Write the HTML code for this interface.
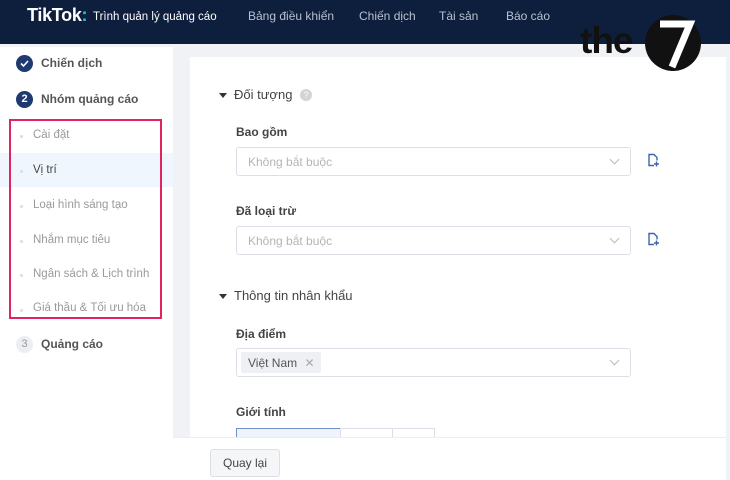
<!DOCTYPE html>
<html><head><meta charset="utf-8"><style>
*{margin:0;padding:0;box-sizing:border-box}
body{width:730px;height:480px;overflow:hidden;background:#f0f2f5;font-family:"Liberation Sans","DejaVu Sans",sans-serif;position:relative;color:#333}
.a{position:absolute;white-space:nowrap}
.hdr{left:0;top:0;width:730px;height:44px;background:#0e1f3e}
.nav{color:#b8c0cf;font-size:12px;top:9px}
.side{left:0;top:47px;width:173px;height:433px;background:#fff}
.main{left:190px;top:57px;width:536px;height:423px;background:#fff}
.sub{left:33px;font-size:11.5px;color:#9a9a9a}
.dot{left:20px;width:3px;height:3px;background:#ddd;border-radius:50%}
.lbl{font-size:12px;font-weight:bold;color:#444}
.inp{left:236px;width:395px;height:29px;border:1px solid #dcdfe6;border-radius:3px;background:#fff}
.ph{left:11px;top:7px;font-size:12px;color:#b5b5b5}
.chev{right:12px;top:8px;width:7px;height:7px;border-right:1px solid #bbb;border-bottom:1px solid #bbb;transform:rotate(45deg)}
.tri{width:0;height:0;border-left:4px solid transparent;border-right:4px solid transparent;border-top:5px solid #333}
</style></head><body>
<div class="a hdr"></div>
<div class="a" style="left:27px;top:5px;color:#fff;font-size:18px;font-weight:bold;letter-spacing:-0.3px">TikTok<span style="color:#25c3e0">:</span></div>
<div class="a" style="left:93px;top:11px;color:#fff;font-size:11.5px">Trình quản lý quảng cáo</div>
<div class="a nav" style="left:248px">Bảng điều khiển</div>
<div class="a nav" style="left:359px">Chiến dịch</div>
<div class="a nav" style="left:439px">Tài sản</div>
<div class="a nav" style="left:506px">Báo cáo</div>

<div class="a side"></div>
<div class="a" style="left:16px;top:55px;width:17px;height:17px;border-radius:50%;background:#1e3a6e"></div>
<svg class="a" style="left:16px;top:55px" width="17" height="17"><path d="M5 8.5 L7.5 11 L12 6" stroke="#fff" stroke-width="1.6" fill="none"/></svg>
<div class="a" style="left:41px;top:56px;font-size:12px;font-weight:bold;color:#555">Chiến dịch</div>
<div class="a" style="left:16px;top:91px;width:17px;height:17px;border-radius:50%;background:#1e3a6e;color:#fff;font-size:11px;font-weight:bold;text-align:center;line-height:17px">2</div>
<div class="a" style="left:41px;top:92px;font-size:12px;font-weight:bold;color:#555">Nhóm quảng cáo</div>
<div class="a" style="left:0;top:153px;width:173px;height:34px;background:#f0f6fd"></div>
<div class="a dot" style="top:135px"></div><div class="a sub" style="top:129px">Cài đặt</div>
<div class="a dot" style="top:170px"></div><div class="a sub" style="top:164px;color:#444">Vị trí</div>
<div class="a dot" style="top:205px"></div><div class="a sub" style="top:199px">Loại hình sáng tạo</div>
<div class="a dot" style="top:240px"></div><div class="a sub" style="top:234px">Nhắm mục tiêu</div>
<div class="a dot" style="top:274px"></div><div class="a sub" style="top:268px">Ngân sách &amp; Lịch trình</div>
<div class="a dot" style="top:309px"></div><div class="a sub" style="top:302px">Giá thầu &amp; Tối ưu hóa</div>
<div class="a" style="left:9px;top:119px;width:153px;height:200px;border:2.5px solid #e0245e"></div>
<div class="a" style="left:16px;top:336px;width:17px;height:17px;border-radius:50%;background:#eceef2;color:#999;font-size:11px;text-align:center;line-height:17px">3</div>
<div class="a" style="left:41px;top:337px;font-size:12px;font-weight:bold;color:#555">Quảng cáo</div>

<div class="a main"></div>
<div class="a tri" style="left:219px;top:93px"></div>
<div class="a" style="left:234px;top:87px;font-size:13px;color:#444">Đối tượng</div>
<div class="a" style="left:300px;top:89px;width:12px;height:12px;border-radius:50%;background:#d4d4d4;color:#fff;font-size:9px;text-align:center;line-height:12px">?</div>
<div class="a lbl" style="left:236px;top:125px">Bao gồm</div>
<div class="a inp" style="top:147px"><div class="a ph">Không bắt buộc</div><div class="a chev"></div></div>
<div class="a lbl" style="left:236px;top:204px">Đã loại trừ</div>
<div class="a inp" style="top:226px"><div class="a ph">Không bắt buộc</div><div class="a chev"></div></div>
<svg class="a" style="left:646px;top:153px" width="14" height="14"><path d="M8 12.5 H3 V1.5 H8 L11 4.5 V7.5" stroke="#3d64ad" stroke-width="1.4" fill="none"/><path d="M10.5 8.5 V13.5 M8 11 H13" stroke="#3d64ad" stroke-width="1.4"/></svg>
<svg class="a" style="left:646px;top:232px" width="14" height="14"><path d="M8 12.5 H3 V1.5 H8 L11 4.5 V7.5" stroke="#3d64ad" stroke-width="1.4" fill="none"/><path d="M10.5 8.5 V13.5 M8 11 H13" stroke="#3d64ad" stroke-width="1.4"/></svg>
<div class="a tri" style="left:219px;top:294px"></div>
<div class="a" style="left:234px;top:288px;font-size:13px;color:#444">Thông tin nhân khẩu</div>
<div class="a lbl" style="left:236px;top:327px">Địa điểm</div>
<div class="a inp" style="top:348px"><div class="a" style="left:4px;top:3px;width:80px;height:21px;background:#eef0f3;border-radius:2px"></div><div class="a" style="left:11px;top:7px;font-size:12px;color:#555">Việt Nam <span style="color:#aaa;margin-left:4px">✕</span></div><div class="a chev"></div></div>
<div class="a lbl" style="left:236px;top:405px">Giới tính</div>
<div class="a" style="left:236px;top:428px;width:105px;height:12px;border:1px solid #6e8fc7;background:#eef4fc"></div>
<div class="a" style="left:340px;top:428px;width:53px;height:12px;border:1px solid #dcdfe6"></div>
<div class="a" style="left:392px;top:428px;width:43px;height:12px;border:1px solid #dcdfe6"></div>
<div class="a" style="left:173px;top:437px;width:553px;height:43px;background:#fff;border-top:1px solid #eee"></div>
<div class="a" style="left:210px;top:449px;width:70px;height:28px;border:1px solid #dcdfe6;border-radius:3px;background:#f5f6f8;font-size:12px;color:#444;text-align:center;line-height:26px">Quay lại</div>

<div class="a" style="left:580px;top:21px;font-size:37px;line-height:40px;font-weight:bold;color:#111;letter-spacing:-1px">the</div>
<div class="a" style="left:645px;top:15px;width:56px;height:56px;border-radius:50%;background:#111"></div>
<svg class="a" style="left:645px;top:15px" width="56" height="56"><path d="M15 9 L45 9 L27 52" stroke="#fff" stroke-width="7" fill="none"/></svg>
</body></html>
